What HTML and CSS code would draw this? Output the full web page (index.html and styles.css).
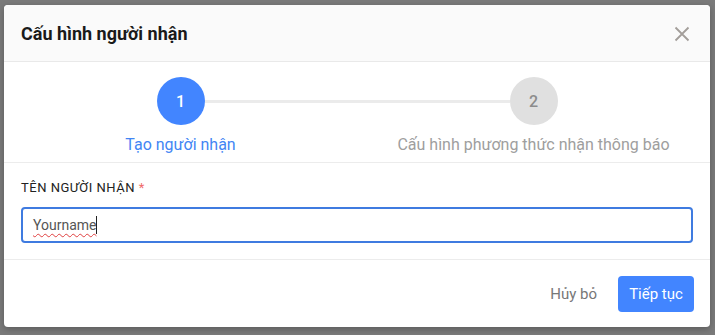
FILE: index.html
```html
<!DOCTYPE html>
<html lang="vi">
<head>
<meta charset="utf-8">
<link rel="stylesheet" href="styles.css">
</head>
<body>
<div class="backdrop">
  <div class="modal">
    <div class="modal-header">
      <h2 class="modal-title">Cấu hình người nhận</h2>
      <span class="close-btn" aria-label="close">
        <svg width="16" height="16" viewBox="0 0 16 16"><path d="M1.5 1.5 L14.5 14.5 M14.5 1.5 L1.5 14.5" stroke="#a39e9a" stroke-width="1.8" fill="none"/></svg>
      </span>
    </div>
    <div class="steps">
      <div class="step step-active step-first">
        <div class="step-circle">1</div>
        <div class="step-label">Tạo người nhận</div>
      </div>
      <div class="step">
        <div class="step-circle">2</div>
        <div class="step-label">Cấu hình phương thức nhận thông báo</div>
      </div>
    </div>
    <div class="form-body">
      <label class="field-label">TÊN NGƯỜI NHẬN <span class="req">*</span></label>
      <div class="input-box"><span class="input-text">Yourname</span><span class="caret"></span></div>
    </div>
    <div class="modal-footer">
      <button class="btn-cancel">Hủy bỏ</button>
      <button class="btn-primary">Tiếp tục</button>
    </div>
  </div>
</div>
</body>
</html>
```

FILE: styles.css
```css
html, body {
  margin: 0;
  padding: 0;
  height: 100%;
}
body {
  background: #7a7a7a;
  font-family: Roboto, "Noto Sans", Arial, sans-serif;
  overflow: hidden;
}
.backdrop {
  padding: 5px 5px 0 4px;
}
.modal {
  width: 706px;
  background: #fff;
  border-radius: 4px;
  overflow: hidden;
  box-shadow: 0 2px 6px rgba(0,0,0,0.25);
}
.modal-header {
  height: 56px;
  background: #fafafa;
  border-bottom: 1px solid #e9e9e9;
  display: flex;
  align-items: center;
  justify-content: space-between;
  padding: 0 20px 0 17px;
}
.modal-title {
  margin: 0;
  font-size: 18px;
  font-weight: 700;
  color: #1a1a1a;
}
.close-btn {
  display: flex;
  width: 16px;
  height: 16px;
  margin-top: 1px;
}
.steps {
  display: grid;
  grid-template-columns: 1fr 1fr;
  padding: 15px 0 7px;
  border-bottom: 1px solid #ececec;
}
.step {
  position: relative;
  display: flex;
  flex-direction: column;
  align-items: center;
}
.step-first::after {
  content: "";
  position: absolute;
  top: 23px;
  left: calc(50% + 24px);
  width: calc(100% - 48px);
  height: 3px;
  background: #ebebeb;
}
.step-circle {
  width: 48px;
  height: 48px;
  border-radius: 50%;
  background: #e0e0e0;
  color: #8c8c8c;
  font-size: 16px;
  font-weight: 500;
  display: flex;
  align-items: center;
  justify-content: center;
}
.step-active .step-circle {
  background: #4285ff;
  color: #fff;
}
.step-label {
  margin-top: 10px;
  font-size: 16px;
  line-height: 20px;
  color: #9e9e9e;
}
.step-active .step-label {
  color: #4285f4;
}
.form-body {
  padding: 17px 17px 16px;
  border-bottom: 1px solid #ececec;
}
.field-label {
  display: block;
  font-size: 13px;
  line-height: 16px;
  letter-spacing: 0.5px;
  color: #222;
  margin-bottom: 11px;
}
.req {
  color: #f06a6a;
}
.input-box {
  height: 32px;
  border: 2px solid #3f7be0;
  border-radius: 4px;
  display: flex;
  align-items: center;
  padding: 0 10px;
}
.input-text {
  font-size: 14px;
  color: #555;
  text-decoration: underline wavy #e04040;
  text-decoration-thickness: 1px;
  text-underline-offset: 3px;
}
.caret {
  width: 1px;
  height: 18px;
  background: #222;
}
.modal-footer {
  height: 67px;
  display: flex;
  align-items: center;
  justify-content: flex-end;
  padding: 0 16px;
  gap: 21px;
}
.btn-cancel {
  border: none;
  background: none;
  font-family: inherit;
  font-size: 15px;
  color: #777;
  padding: 0;
}
.btn-primary {
  border: none;
  background: #4285ff;
  color: #fff;
  font-family: inherit;
  font-size: 15px;
  height: 36px;
  width: 76px;
  border-radius: 4px;
  padding: 0;
}
```
